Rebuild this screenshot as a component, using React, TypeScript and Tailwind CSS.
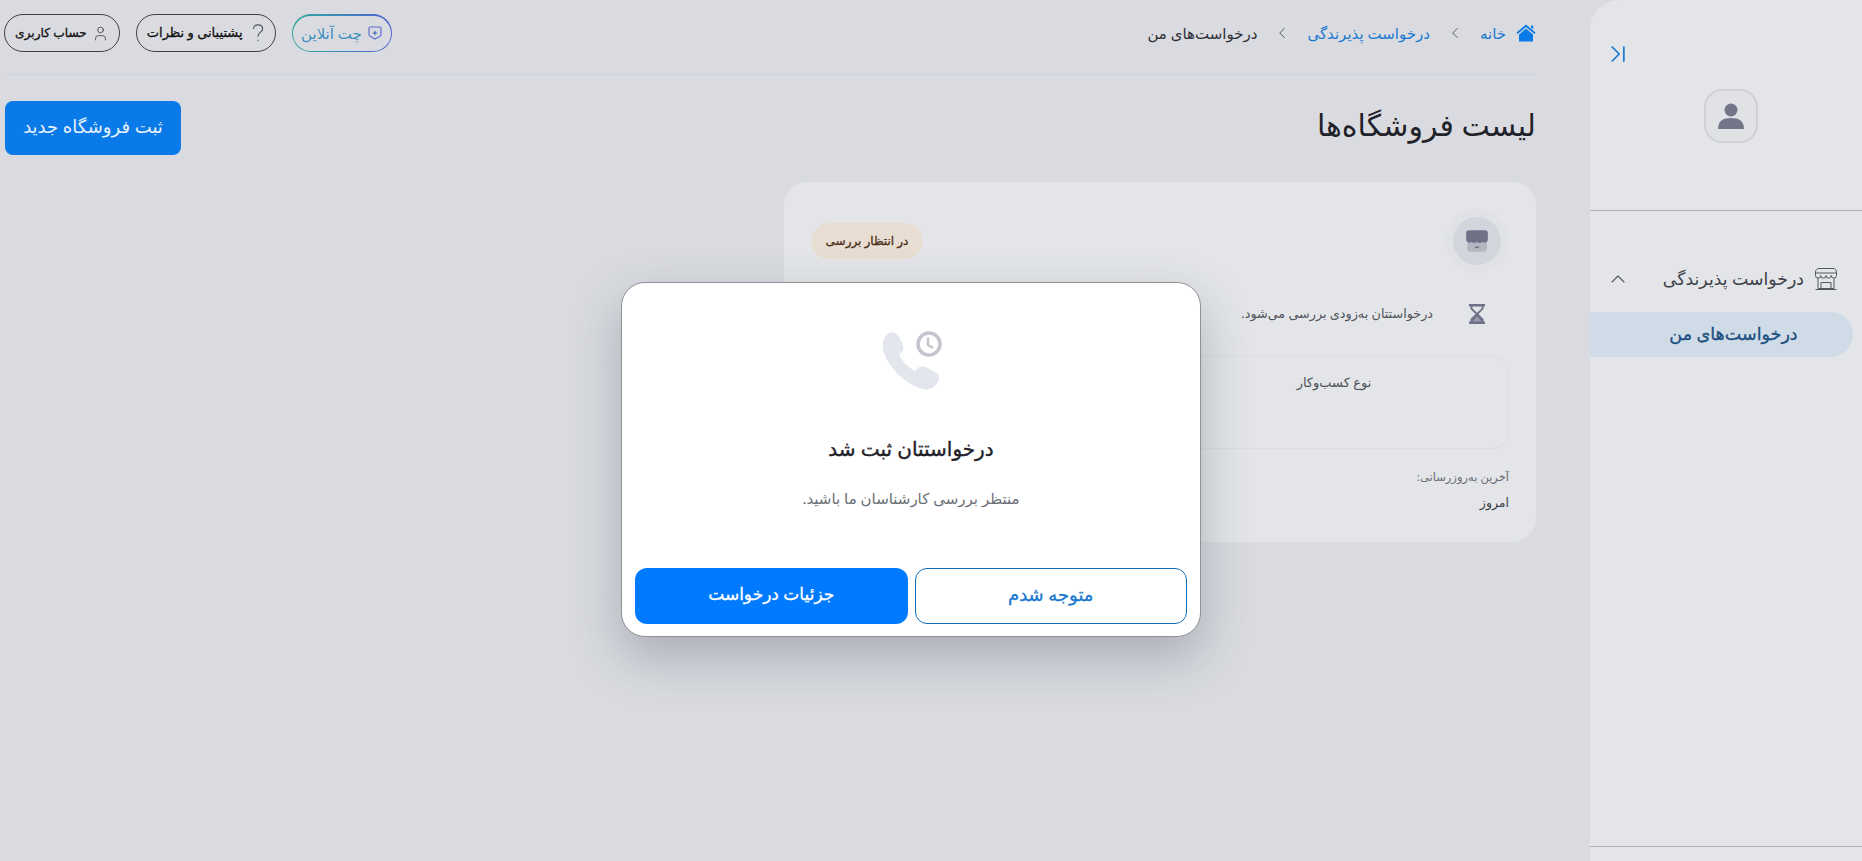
import { ChevronLast, ChevronLeft, ChevronUp, User } from "lucide-react";

function HomeIcon() {
  return (
    <svg width="20" height="20" viewBox="0 0 20 20" fill="#0a7ae8">
      <path d="M10 1.500 19.500 9.600 18.400 11 10 4 1.600 11 .5 9.600z" />
      <path d="M15 2.500h2.200v4L15 4.600z" />
      <path d="M10 5.600 17 11.400V18.500H3V11.400z" />
    </svg>
  );
}

function ChatIcon() {
  return (
    <svg width="16" height="16" viewBox="0 0 16 16" fill="none" stroke="#5f6fd0" strokeWidth="1.200">
      <path d="M2 3.200C2 2.500 2.500 2 3.200 2h9.600c.7 0 1.200.5 1.200 1.200v6.300c0 .6-.3 1.100-.8 1.400L8 14l-5.200-3.100c-.5-.3-.8-.8-.8-1.400z" />
      <path d="M8 5 8.800 7.200 11 8 8.800 8.800 8 11 7.200 8.800 5 8 7.200 7.200z" fill="#4f74c8" stroke="none" />
    </svg>
  );
}

function QuestionIcon() {
  return (
    <svg width="14" height="20" viewBox="0 0 14 20" fill="none" stroke="#55585f" strokeWidth="1.200" strokeLinecap="round">
      <path d="M2.500 5.500C2.800 3 4.700 1.800 7 1.800c2.600 0 4.600 1.600 4.600 4 0 3.600-4.600 3.600-4.600 7.400" />
      <path d="M7 17.200v.4" />
    </svg>
  );
}

function StoreOutlineIcon() {
  return (
    <svg width="24" height="24" viewBox="0 0 24 24" fill="none" stroke="#55585f" strokeWidth="1">
      <path d="M5 1.500h14c2 0 3.500 1.500 3.500 3.500v3.500a2.600 2.600 0 0 1-5.200 0 2.650 2.650 0 0 1-5.300 0 2.650 2.650 0 0 1-5.300 0 2.600 2.600 0 0 1-5.200 0V5C1.500 3 3 1.500 5 1.500z" />
      <path d="M1.500 6h21M4 11v10.500h16V11M1.500 22.500h21M7 21.500v-6h10v6" />
    </svg>
  );
}

function ShopBadgeIcon() {
  return (
    <svg width="26" height="26" viewBox="0 0 24 24">
      <path d="M3 11h18v8a3 3 0 0 1-3 3H6a3 3 0 0 1-3-3z" fill="#b4b6c1" />
      <path d="M5 2h14a3 3 0 0 1 3 3v6a3 3 0 0 1-5 1.600 3.600 3.600 0 0 1-5 0 3.600 3.600 0 0 1-5 0A3 3 0 0 1 2 11V5a3 3 0 0 1 3-3z" fill="#6f7287" />
      <rect x="10" y="17" width="4" height="1.500" rx=".7" fill="#6f7287" />
    </svg>
  );
}

function HourglassIcon() {
  return (
    <svg width="18" height="22" viewBox="0 0 18 22">
      <path d="M1 1h16v2.500h-1.500V6L10.500 11l5 5v2.500H17V21H1v-2.500h1.500V16l5-5-5-5V3.500H1z" fill="#6f7287" />
      <path d="M4.500 3.500h9V5.500L9 9.800 4.500 5.500z" fill="#e3e5e8" />
      <path d="M9 13.500 13.500 18.500h-9z" fill="#9a9cab" />
    </svg>
  );
}

function PhoneClockIcon() {
  return (
    <svg width="62" height="62" viewBox="0 0 62 62" fill="none">
      <path
        d="M7 3C11 1 15 3 17 7L21 15C22 18 21 21 19 23L17 25C20 31 27 38 33 41L36 38C38 36 41 36 44 37L53 42C57 44 58 48 56 52C53 58 46 61 40 59C22 53 6 37 1 20C0 12 2 6 7 3Z"
        fill="#e3e6ec"
      />
      <circle cx="47" cy="14" r="11" fill="white" stroke="#c4c6cd" strokeWidth="3.500" />
      <path d="M46 7.500V15l5 3" stroke="#c4c6cd" strokeWidth="2.500" />
    </svg>
  );
}

export default function App() {
  return (
    <div
      dir="rtl"
      className="relative h-[861px] w-[1862px] overflow-hidden flex bg-[#d9dbe0] font-['Noto_Sans','DejaVu_Sans',sans-serif]"
    >
      {/* sidebar */}
      <aside className="w-[272px] h-full shrink-0 bg-[#e3e5e8] rounded-tl-[30px] flex flex-col">
        <div className="h-[211px] border-b border-[#adafb5] shrink-0 flex flex-col">
          <div className="pt-[40px] pl-[14px] flex justify-end">
            <ChevronLast size={28} strokeWidth={1.5} className="text-[#1a78d0]" />
          </div>
          <div className="mt-[21px] pl-[10px] flex justify-center">
            <div className="w-[54px] h-[54px] rounded-[18px] border-2 border-[#cfd1d6] bg-[#e0e2e6] flex items-center justify-center">
              <svg width="28" height="28" viewBox="0 0 28 28" fill="#737689">
                <circle cx="14" cy="8" r="6.500" />
                <path d="M1 27c0-8 5-11 13-11s13 3 13 11z" />
              </svg>
            </div>
          </div>
        </div>
        <div className="mt-[51px] h-[34px] pr-[24px] pl-[16px] flex items-center text-[#3d4048]">
          <StoreOutlineIcon />
          <span className="mr-[10px] text-[17.300px]">درخواست پذیرندگی</span>
          <ChevronUp size={24} strokeWidth={1.1} className="mr-auto text-[#55585f]" />
        </div>
        <div className="mt-auto mb-[14px] border-b border-[#adafb5]" />
      </aside>

      {/* active item sits flush with the sidebar edge */}
      <div className="absolute left-[1590px] top-[312px] w-[263px] h-[45px] rounded-r-full bg-[#cfdce8] flex items-center justify-center pl-[24px] pb-[2px] text-[17.500px] [-webkit-text-stroke:0.3px] text-[#1c4f80]">
        درخواست‌های من
      </div>

      {/* main */}
      <main className="flex-1 pr-[54px] pl-[5px]">
        <header className="h-[75px] border-b border-[#d0d2dc] flex items-center justify-between pb-[8px]">
          <nav className="flex items-center text-[15px]">
            <HomeIcon />
            <span className="mr-[10px] text-[#1a78d0]">خانه</span>
            <ChevronLeft size={18} strokeWidth={1.2} className="mx-[16px] text-[#4a4d55]" />
            <span className="text-[#1a78d0]">درخواست پذیرندگی</span>
            <ChevronLeft size={18} strokeWidth={1.2} className="mx-[16px] text-[#4a4d55]" />
            <span className="text-[#2e3036]">درخواست‌های من</span>
          </nav>
          <div className="flex items-center gap-[16px] -ml-[1px]">
            <div className="rounded-full p-[1.500px] bg-gradient-to-r from-[#2aa7a0] to-[#4f5fd0]">
              <div className="h-[35px] px-[8px] rounded-full bg-[#d9dbe0] flex items-center gap-[5px] text-[15px] text-[#3f8fc0]">
                <ChatIcon />
                چت آنلاین
              </div>
            </div>
            <button className="h-[38px] px-[10px] flex items-center gap-2 rounded-full border border-[#3f4147] text-[13px] [-webkit-text-stroke:0.3px] text-[#111]">
              <QuestionIcon />
              پشتیبانی و نظرات
            </button>
            <button className="h-[38px] px-[10px] flex items-center gap-[5px] rounded-full border border-[#3f4147] text-[12.200px] [-webkit-text-stroke:0.3px] text-[#111]">
              <User size={17} strokeWidth={1.1} className="text-[#33353a]" />
              حساب کاربری
            </button>
          </div>
        </header>

        <div className="mt-[26px] flex items-center justify-between">
          <h1 className="-mt-[7px] text-[30px] leading-[54px] text-[#1f2229]">لیست فروشگاه‌ها</h1>
          <button className="w-[176px] h-[54px] pb-[4px] rounded-[8px] bg-[#0a7ae8] text-[18px] text-[#e6f2fc]">
            ثبت فروشگاه جدید
          </button>
        </div>

        <section className="mt-[27px] w-[752px] h-[360px] rounded-[24px] bg-[#e3e5e8] px-[27px]">
          <div className="h-[120px] pt-[27px] flex items-start justify-between">
            <div className="w-[64px] h-[64px] rounded-full bg-[#e0e2e6] flex items-center justify-center">
              <div className="w-[48px] h-[48px] rounded-full bg-[#d3d5dc] flex items-center justify-center">
                <ShopBadgeIcon />
              </div>
            </div>
            <span className="mt-[14px] h-[36px] w-[112px] rounded-full bg-[#e8ddd2] flex items-center justify-center text-[12px] [-webkit-text-stroke:0.3px] text-[#4a2f17]">
              در انتظار بررسی
            </span>
          </div>
          <div className="-mt-[5px] h-[34px] flex items-center text-[12.750px] text-[#4f5259]">
            <span className="w-[64px] flex justify-center">
              <HourglassIcon />
            </span>
            <span className="mr-[12px]">درخواستتان به‌زودی بررسی می‌شود.</span>
          </div>
          <div className="mt-[25px] h-[93px] rounded-[16px] border border-[#dcdee2] grid grid-cols-2 text-[13px] text-[#4f5259]">
            <div className="pt-[16px] text-center">نوع کسب‌وکار</div>
            <div />
          </div>
          <div className="mt-[18px] text-[11.500px] leading-[20px] text-[#6a6d74]">آخرین به‌روزرسانی:</div>
          <div className="mt-[6px] text-[12.500px] leading-[20px] text-[#3d4048]">امروز</div>
        </section>
      </main>

      {/* dialog */}
      <div
        role="dialog"
        className="absolute left-[621px] top-[282px] w-[580px] h-[355px] rounded-[24px] bg-white border border-[#8f9198] shadow-[0_20px_50px_rgba(60,64,80,0.3)] flex flex-col items-center px-[13px]"
      >
        <div className="mt-[47px] pl-[4px]">
          <PhoneClockIcon />
        </div>
        <h2 className="mt-[37px] text-[20px] [-webkit-text-stroke:0.4px] leading-[40px] text-[#1f2229]">درخواستتان ثبت شد</h2>
        <p className="mt-[14px] text-[15px] leading-[30px] text-[#6a6d74]">منتظر بررسی کارشناسان ما باشید.</p>
        <div className="mt-auto mb-[12px] w-full grid grid-cols-2 gap-[7px]">
          <button className="h-[56px] pb-[4px] rounded-[12px] border border-[#0f6cb8] text-[18px] [-webkit-text-stroke:0.3px] text-[#1a78d0]">
            متوجه شدم
          </button>
          <button className="h-[56px] pb-[4px] rounded-[12px] bg-[#007aff] text-[17px] [-webkit-text-stroke:0.3px] text-white">
            جزئیات درخواست
          </button>
        </div>
      </div>
    </div>
  );
}
